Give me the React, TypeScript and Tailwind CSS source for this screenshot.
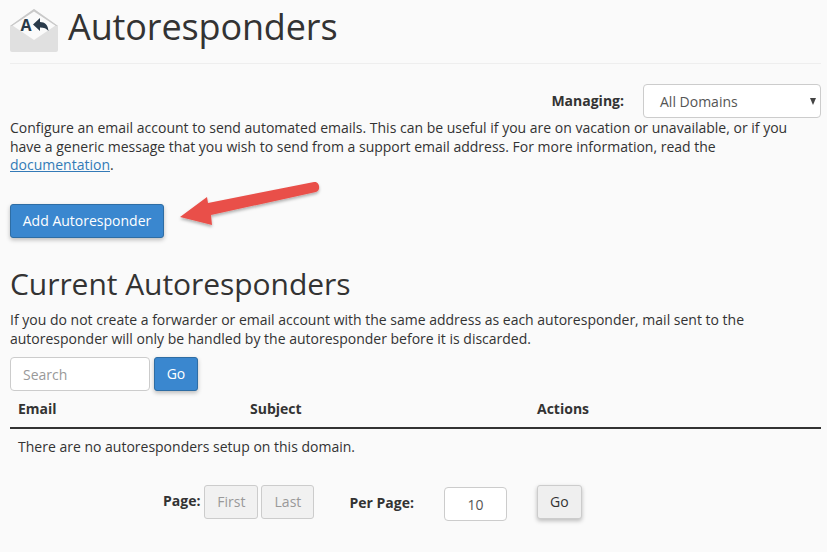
import React from "react";

function EnvelopeIcon() {
  return (
    <svg width="48" height="43" viewBox="0 0 48 43" className="block shrink-0 mt-[1px]">
      <path d="M0 17 L24 0 L48 17 V41 a2 2 0 0 1 -2 2 H2 a2 2 0 0 1 -2 -2 Z" fill="#e0e0e0" />
      <path d="M2.5 16.5 L24 1.5 L45.5 16.5 L24 31 Z" fill="#fafafa" />
      <path d="M0 17 L24 0 L48 17 L46 17 L24 2.5 L2 17 Z" fill="#c9c9c9" />
      <text x="16" y="22" textAnchor="middle" fontFamily="'Open Sans', sans-serif" fontWeight="700" fontSize="16" fill="#293a4a">A</text>
      <path d="M23 15.5 L30 9 V13 C35 13 38 16 38.5 22 C36.5 19.5 34 18.5 30 18.5 V22 Z" fill="#293a4a" />
    </svg>
  );
}

function Arrow() {
  return (
    <svg width="150" height="60" viewBox="0 0 150 60" className="absolute left-[178px] top-[178px]">
      <defs>
        <filter id="arrowShadow" x="-10%" y="-20%" width="120%" height="150%">
          <feDropShadow dx="0" dy="2" stdDeviation="1.5" floodColor="#000" floodOpacity="0.3" />
        </filter>
      </defs>
      <path
        d="M2 39 L29 19 L30 25 L136 4 C142 3 143 13 138 14 L33 37 L34 47 Z"
        fill="#e9504a"
        filter="url(#arrowShadow)"
      />
    </svg>
  );
}

export default function App() {
  return (
    <div className="relative w-[827px] h-[552px] overflow-hidden bg-[#fafafa] pl-[10px] pr-[6px] font-['Open_Sans',sans-serif] text-[14px] leading-[18.5px] text-[#333]">
      <header className="flex items-start gap-[10px] h-[64px] border-b border-[#eeeeee] pt-[8px]">
        <EnvelopeIcon />
        <h1 className="text-[36px] leading-[40px] font-normal tracking-[-0.13px] text-[#333] -mt-[1px]">Autoresponders</h1>
      </header>

      <div className="flex justify-end items-center h-[34px] mt-[20px] gap-[19px]">
        <span className="font-bold">Managing:</span>
        <div className="relative w-[178px] h-[34px] rounded-[4px] border border-[#cccccc] bg-white pl-[16px] pt-[2px] flex items-center text-[#555]">
          All Domains
          <span className="absolute right-[4px] top-[13px] w-0 h-0 border-x-[3.5px] border-x-transparent border-t-[7px] border-t-[#444]" />
        </div>
      </div>

      <p className="mt-[1px]">
        Configure an email account to send automated emails. This can be useful if you are on vacation or unavailable, or if you have a generic message that you wish to send from a support email address. For more information, read the{" "}
        <a className="text-[#337ab7] underline">documentation</a>.
      </p>

      <button className="block mt-[29.5px] w-[154px] h-[34px] rounded-[3px] border border-[#2e6da4] bg-[#3a87cf] text-white shadow-[0_2px_4px_rgba(0,0,0,0.25)]">
        Add Autoresponder
      </button>

      <h2 className="mt-[26px] text-[30px] leading-[40px] font-normal tracking-[-0.05px] text-[#333]">Current Autoresponders</h2>
      <p className="mt-[7px]">
        If you do not create a forwarder or email account with the same address as each autoresponder, mail sent to the autoresponder will only be handled by the autoresponder before it is discarded.
      </p>

      <div className="flex gap-[4px] mt-[9px]">
        <div className="w-[140px] h-[34px] rounded-[4px] border border-[#cccccc] bg-white pl-[12px] pt-[2px] flex items-center text-[#999]">Search</div>
        <button className="w-[44px] h-[34px] rounded-[3px] border border-[#2e6da4] bg-[#3a87cf] text-white shadow-[0_2px_4px_rgba(0,0,0,0.25)]">Go</button>
      </div>

      <div className="grid grid-cols-[232px_287px_1fr] h-[37px] mt-[1px] items-center pl-[8px] font-bold border-b-2 border-[#333]">
        <span>Email</span>
        <span>Subject</span>
        <span>Actions</span>
      </div>
      <div className="pl-[8px] pt-[9px]">There are no autoresponders setup on this domain.</div>

      <div className="flex mt-[28.5px] ml-[153px] items-start">
        <span className="font-bold mt-[7px] mr-[4px]">Page:</span>
        <div className="w-[54px] h-[34px] rounded-[3px] border border-[#cccccc] bg-[#f1f1f1] flex items-center justify-center text-[#999]">First</div>
        <div className="w-[53px] h-[34px] ml-[3px] rounded-[3px] border border-[#cccccc] bg-[#f1f1f1] flex items-center justify-center text-[#999]">Last</div>
        <span className="font-bold mt-[9px] ml-[35px]">Per Page:</span>
        <div className="w-[63px] h-[34px] mt-[2px] ml-[30px] rounded-[4px] border border-[#cccccc] bg-white pt-[2px] flex items-center justify-center text-[#555]">10</div>
        <button className="w-[45px] h-[34px] ml-[30px] rounded-[3px] border border-[#cccccc] bg-[#efefef] text-[#333] shadow-[0_2px_4px_rgba(0,0,0,0.25)]">Go</button>
      </div>

      <Arrow />
    </div>
  );
}
